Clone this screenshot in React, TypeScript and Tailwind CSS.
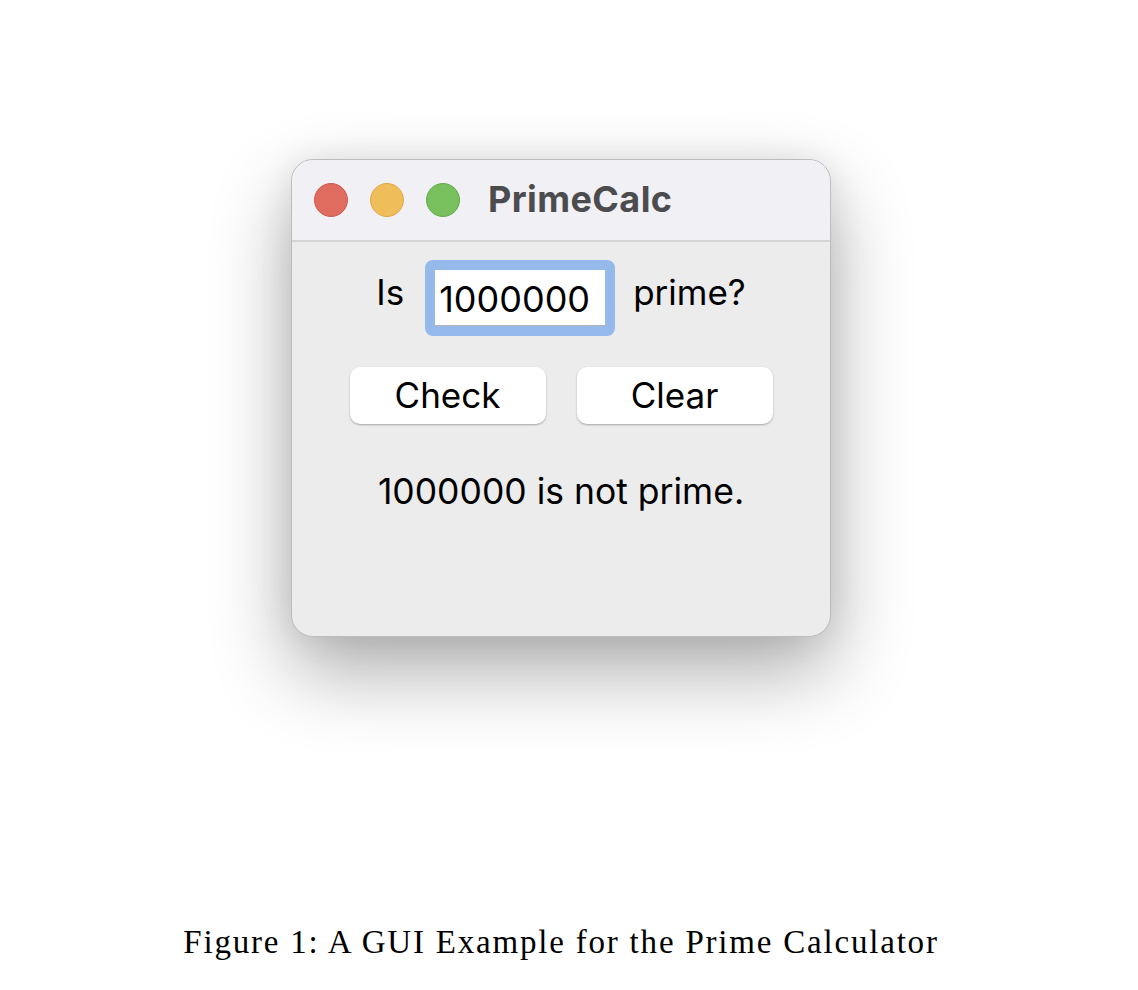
import React from 'react';

const uiFont = { fontFamily: 'Inter, "Noto Sans", sans-serif' };

export default function App() {
  return (
    <div className="min-h-[990px] w-[1138px] bg-white flex flex-col items-center pr-[16px]" style={uiFont}>
      <div className="mt-[159px] w-[540px] h-[478px] rounded-[22px] border border-[#bcbcbc] bg-[#ececec] overflow-hidden shadow-[0_34px_80px_rgba(0,0,0,0.33),0_0_34px_rgba(0,0,0,0.08)] flex flex-col">
        <div className="h-[82px] bg-[#f0f0f5] border-b-2 border-[#d4d4d6] flex items-center pl-[22px]">
          <div className="flex items-center gap-[22px]">
            <span className="w-[34px] h-[34px] rounded-full bg-[#e06c5f] border border-[#cc5a4e]" />
            <span className="w-[34px] h-[34px] rounded-full bg-[#efbe5b] border border-[#dcaa48]" />
            <span className="w-[34px] h-[34px] rounded-full bg-[#78c05d] border border-[#62ab4b]" />
          </div>
          <span className="ml-[28px] text-[36px] font-bold text-[#4c4c4e] -mt-[2px] tracking-[0.4px]">PrimeCalc</span>
        </div>

        <div className="flex flex-col items-center pt-[18px]">
          <div className="flex items-center">
            <span className="text-[35px] text-black -mt-[12px]">Is</span>
            <div className="ml-[21px] rounded-[8px] bg-[#95b9ea] p-[10px]">
              <div className="w-[170px] h-[56px] bg-white border-b border-[#b5b5b5] flex items-center pl-[4px]">
                <span className="text-[36px] text-black leading-none mt-[2px]">1000000</span>
              </div>
            </div>
            <span className="ml-[18px] text-[35px] text-black -mt-[12px]">prime?</span>
          </div>

          <div className="flex gap-[31px] mt-[31px]">
            <button className="w-[196px] h-[57px] rounded-[10px] bg-white shadow-[0_1px_2px_rgba(0,0,0,0.3)] text-[35px] text-black leading-none">
              Check
            </button>
            <button className="w-[196px] h-[57px] rounded-[10px] bg-white shadow-[0_1px_2px_rgba(0,0,0,0.3)] text-[35px] text-black leading-none">
              Clear
            </button>
          </div>

          <div className="mt-[41px] text-[35.5px] text-black">1000000 is not prime.</div>
        </div>
      </div>

      <div
        className="mt-[281px] text-[33px] tracking-[1.8px] text-black"
        style={{ fontFamily: '"Liberation Serif", "DejaVu Serif", serif' }}
      >
        Figure 1: A GUI Example for the Prime Calculator
      </div>
    </div>
  );
}
